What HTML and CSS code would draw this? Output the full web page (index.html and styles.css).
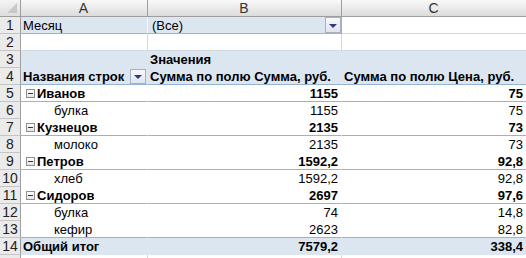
FILE: index.html
```html
<!DOCTYPE html>
<html lang="ru">
<head>
<meta charset="utf-8">
<title>Сводная таблица</title>
<link rel="stylesheet" href="styles.css">
</head>
<body>
<div class="sheet">
  <div class="c corner"><svg class="corner-tri" width="12" height="12" viewBox="0 0 12 12"><polygon points="11,1 11,11 1,11" fill="#c9c9c9"/></svg></div>
  <div class="c ch">A</div>
  <div class="c ch">B</div>
  <div class="c ch">C</div>

  <div class="c rh">1</div>
  <div class="c fill r1a">Месяц</div>
  <div class="c fill r1b"><span>(Все)</span><span class="dd"><i class="tri"></i></span></div>
  <div class="c"></div>

  <div class="c rh">2</div>
  <div class="c"></div>
  <div class="c"></div>
  <div class="c"></div>

  <div class="c rh">3</div>
  <div class="c fill"></div>
  <div class="c fill b">Значения</div>
  <div class="c fill"></div>

  <div class="c rh">4</div>
  <div class="c fill bl b lab">Названия строк<span class="dd dd-s"><i class="tri"></i></span></div>
  <div class="c fill bl b">Сумма по полю Сумма, руб.</div>
  <div class="c fill bl b hc">Сумма по полю Цена, руб.</div>

  <div class="c rh">5</div>
  <div class="c pv bl b grp"><span class="tog"></span>Иванов</div>
  <div class="c pv bl b num">1155</div>
  <div class="c pv bl b num">75</div>

  <div class="c rh">6</div>
  <div class="c pv item">булка</div>
  <div class="c pv num">1155</div>
  <div class="c pv num">75</div>

  <div class="c rh">7</div>
  <div class="c pv bl b grp"><span class="tog"></span>Кузнецов</div>
  <div class="c pv bl b num">2135</div>
  <div class="c pv bl b num">73</div>

  <div class="c rh">8</div>
  <div class="c pv item">молоко</div>
  <div class="c pv num">2135</div>
  <div class="c pv num">73</div>

  <div class="c rh">9</div>
  <div class="c pv bl b grp"><span class="tog"></span>Петров</div>
  <div class="c pv bl b num">1592,2</div>
  <div class="c pv bl b num">92,8</div>

  <div class="c rh">10</div>
  <div class="c pv item">хлеб</div>
  <div class="c pv num">1592,2</div>
  <div class="c pv num">92,8</div>

  <div class="c rh">11</div>
  <div class="c pv bl b grp"><span class="tog"></span>Сидоров</div>
  <div class="c pv bl b num">2697</div>
  <div class="c pv bl b num">97,6</div>

  <div class="c rh">12</div>
  <div class="c pv item">булка</div>
  <div class="c pv num">74</div>
  <div class="c pv num">14,8</div>

  <div class="c rh">13</div>
  <div class="c pv bl item">кефир</div>
  <div class="c pv bl num">2623</div>
  <div class="c pv bl num">82,8</div>

  <div class="c rh">14</div>
  <div class="c fill b">Общий итог</div>
  <div class="c fill b num">7579,2</div>
  <div class="c fill b num">338,4</div>

  <div class="c rh"></div>
  <div class="c"></div>
  <div class="c"></div>
  <div class="c"></div>
</div>
</body>
</html>
```

FILE: styles.css
```css
html, body {
  margin: 0;
  padding: 0;
  background: #ffffff;
  overflow: hidden;
}

.sheet {
  display: grid;
  grid-template-columns: 21px 127px 194px 185px;
  grid-auto-rows: 17px;
  font-family: "Liberation Sans", Arial, sans-serif;
  font-size: 13px;
  color: #000;
}

.c {
  box-sizing: border-box;
  border-right: 1px solid #d0d7e5;
  border-bottom: 1px solid #d0d7e5;
  padding: 0 3px 0 2px;
  line-height: 15px;
  white-space: nowrap;
  overflow: hidden;
  display: flex;
  align-items: flex-end;
}

.corner {
  background: linear-gradient(#f4f4f4, #dedede);
  border-right-color: #9e9e9e;
  border-bottom-color: #9e9e9e;
  padding: 0;
  justify-content: flex-end;
  align-items: flex-end;
}

.corner-tri {
  display: block;
  margin: 0 2px 2px 0;
}

.ch {
  background: linear-gradient(#f9f9f9 0%, #ececec 45%, #dcdcdc 100%);
  border-right-color: #9e9e9e;
  border-bottom-color: #9e9e9e;
  justify-content: center;
  font-size: 14px;
  color: #333;
  line-height: 16px;
}

.rh {
  background: #ebebeb;
  border-right-color: #9e9e9e;
  border-bottom-color: #c5c5c5;
  justify-content: center;
  padding: 0;
  font-size: 14px;
  color: #222;
}

.fill {
  background: #dce6f1;
  border-right-color: #dce6f1;
  border-bottom-color: #dce6f1;
}

.r1a {
  border-right-color: #f4f7fb;
  border-bottom-color: #95b3d7;
}

.r1b {
  border-right-color: #95b3d7;
  border-bottom-color: #95b3d7;
  padding-left: 4px;
  padding-right: 0;
  justify-content: space-between;
}

.pv {
  background: #ffffff;
  border-right-color: #ffffff;
  border-bottom-color: #ffffff;
}

.bl {
  border-bottom-color: #95b3d7;
}

.b {
  font-weight: bold;
}

.lab {
  justify-content: space-between;
  padding-right: 0;
}

.hc {
  padding-left: 2px;
}

.num {
  justify-content: flex-end;
  padding-right: 3px;
}

.grp {
  padding-left: 5px;
}

.item {
  padding-left: 33px;
}

.tog {
  box-sizing: border-box;
  width: 9px;
  height: 9px;
  border: 1px solid #8e8e8e;
  background: linear-gradient(#ffffff, #e6e6e6);
  margin: 0 2px 3px 0;
  display: flex;
  align-items: center;
  justify-content: center;
  flex: none;
}

.tog::before {
  content: "";
  width: 5px;
  height: 1px;
  background: #333;
}

.dd {
  box-sizing: border-box;
  width: 16px;
  height: 16px;
  border: 1px solid #a5b2c4;
  background: linear-gradient(#f6f8fb, #dfe5ee);
  display: flex;
  align-items: center;
  justify-content: center;
  flex: none;
  align-self: flex-start;
}

.dd-s {
  margin-top: 1px;
  margin-right: 1px;
  height: 15px;
}

.tri {
  width: 0;
  height: 0;
  border-left: 4px solid transparent;
  border-right: 4px solid transparent;
  border-top: 4px solid #2f3b7a;
  margin-top: 1px;
}
```
